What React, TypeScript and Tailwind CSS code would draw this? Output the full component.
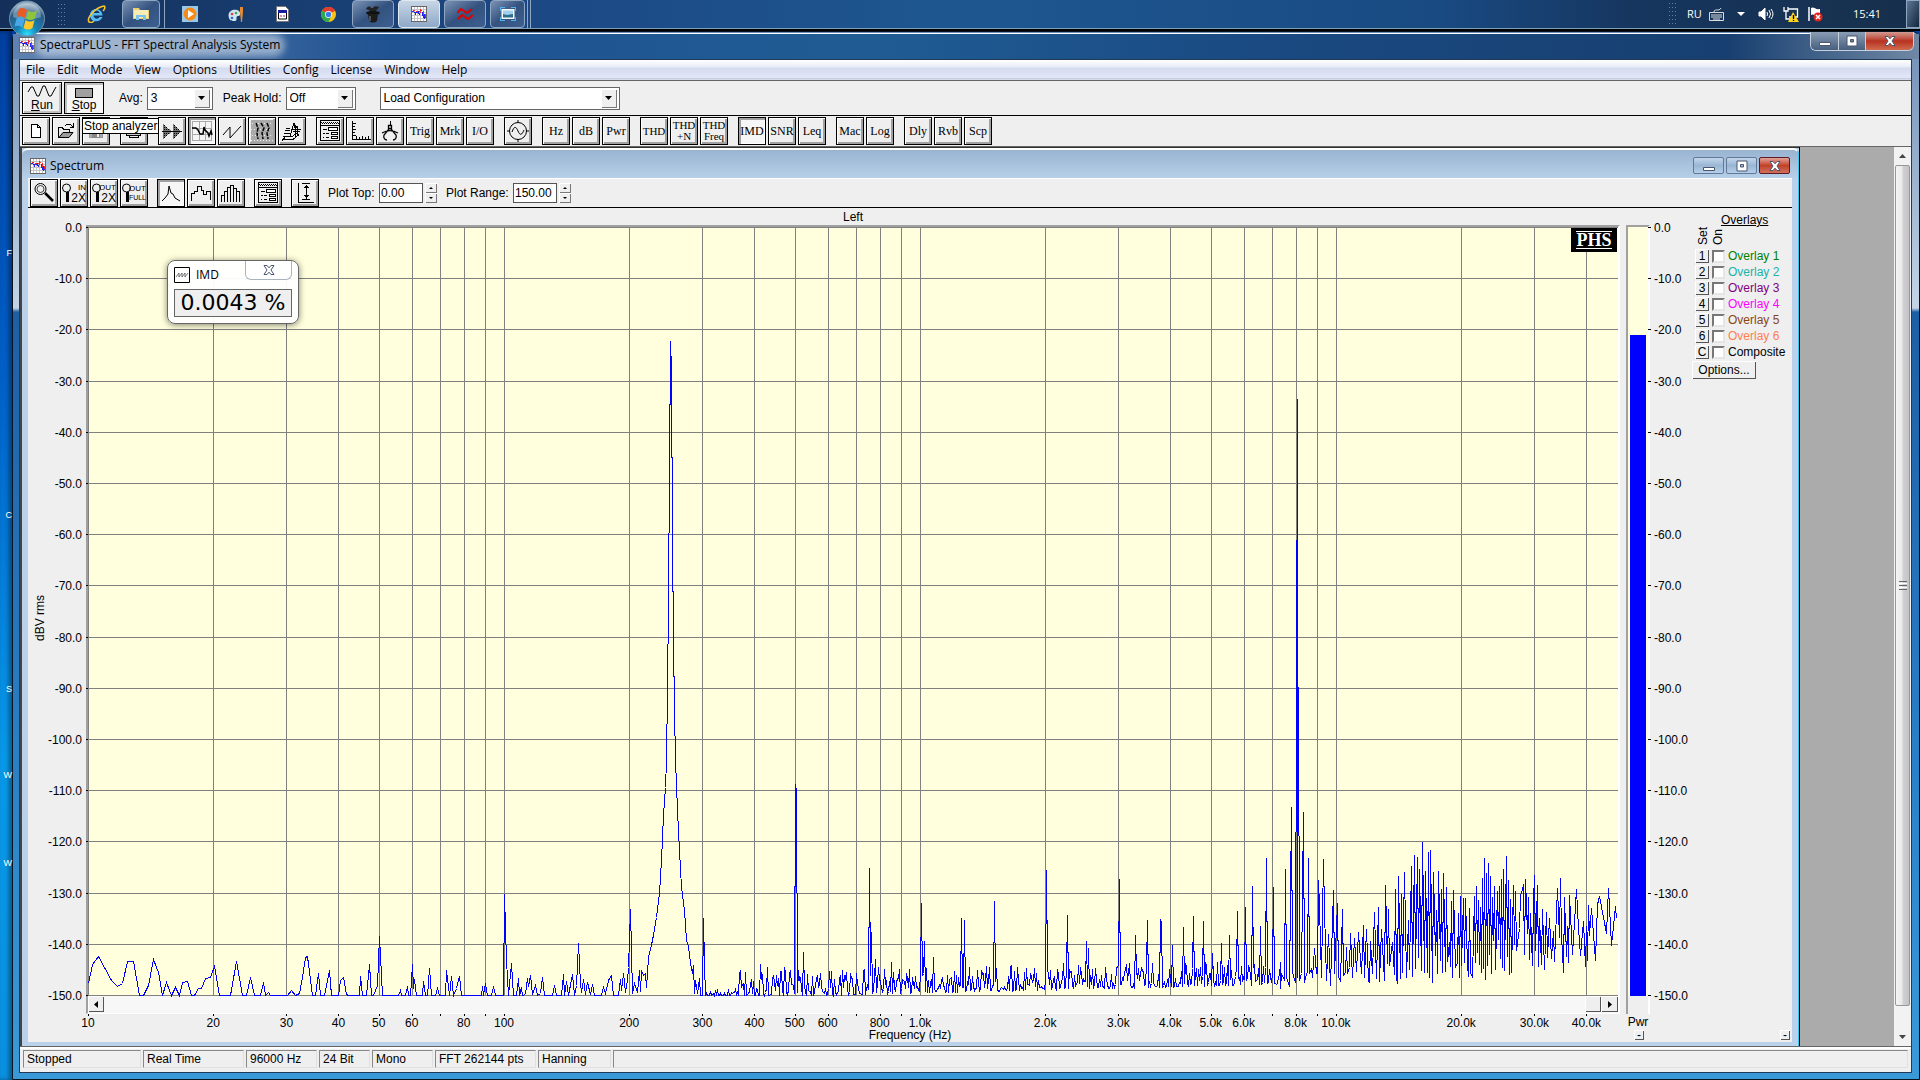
import { useId, type ReactNode } from 'react';

type Point = [number, number];

type ToolItem = {
    name: string;
    icon?: ReactNode;
    label?: string[];
    pressed?: boolean;
}

/* Trace geometry: x 88..1618 is 10 Hz..47.6 kHz, y 227..995 is 0..-150 dB */
const LEFT = 88;
const TOP = 227;
const WIDTH = 1530;
const HEIGHT = 768;
const DECADES = 3.678;

const lowBand: Point[] = [
    [88, 983], [92, 964], [98, 956], [111, 980], [117, 986], [122, 983], [127, 961], [133, 961], [139, 995], [143, 995], [148, 985], [153, 959], [158, 972],
    [162, 995], [166, 982], [171, 995], [175, 987], [179, 995], [182, 982], [187, 981], [191, 995], [194, 995], [198, 988], [201, 988], [205, 978], [210, 977],
    [214, 966], [219, 995], [230, 995], [236, 961], [242, 995], [246, 995], [250, 977], [254, 995], [260, 995], [263, 982], [265, 995], [268, 992], [270, 995],
    [287, 995], [291, 990], [295, 995], [299, 993], [302, 977], [305, 957], [307, 956], [312, 995], [315, 995], [318, 973], [320, 995], [324, 995], [329, 970],
    [331, 995], [338, 995], [340, 980], [343, 977], [346, 994], [348, 995], [359, 995], [360, 976], [362, 995], [366, 995], [369, 964], [371, 995], [373, 995],
    [377, 985], [379, 936], [382, 995], [398, 995], [400, 990], [401, 995], [405, 995], [407, 986], [408, 995], [410, 995], [412, 964], [413, 988], [414, 979],
    [416, 995], [422, 995], [423, 981], [425, 995], [427, 995], [429, 968], [431, 995], [435, 995], [437, 988], [439, 995], [445, 995], [446, 970], [449, 995],
    [451, 976], [453, 995], [456, 988], [459, 976], [461, 995], [481, 995], [482, 986], [483, 995], [485, 983], [487, 995], [491, 995], [493, 986], [495, 995],
    [503, 995], [504, 894], [506, 960], [508, 995], [511, 963], [513, 995], [516, 995], [518, 978], [519, 995], [521, 987], [522, 995], [525, 994], [527, 978],
    [528, 986], [530, 975], [532, 994], [535, 985], [537, 995], [540, 993], [542, 977], [544, 995], [552, 995], [554, 985], [556, 995], [561, 995], [563, 974],
    [564, 995], [566, 981], [568, 995], [572, 974], [574, 995], [576, 985], [578, 943], [580, 983], [581, 992], [583, 979], [585, 994], [587, 982], [590, 994],
    [592, 984], [594, 995], [601, 995], [603, 987], [605, 993], [608, 980], [611, 975], [613, 995], [618, 995], [620, 979], [621, 990], [623, 973], [625, 992],
    [627, 980], [628, 967], [630, 909], [632, 993], [634, 983], [637, 992], [639, 970], [640, 991], [641, 970], [643, 975], [645, 973], [646, 987], [648, 957],
    [652, 940], [656, 917], [659, 893], [661, 860], [663, 815], [665, 787], [666, 760], [667, 690], [668, 600], [669, 470], [670, 341], [671, 370], [672, 540],
    [673, 640], [674, 710], [675, 760], [677, 810], [679, 850], [681, 887], [684, 910], [686, 940], [688, 946], [690, 963], [692, 973], [693, 965], [694, 993],
    [695, 980], [697, 993], [699, 978], [700, 995], [702, 995], [703, 918], [704, 963], [705, 995],
];

const midPeaks: Point[] = [
    [739, 973], [760, 964], [767, 967], [781, 971], [784, 967], [789, 973], [795, 784], [796, 790], [803, 952], [829, 971], [846, 972], [850, 973], [856, 973],
    [869, 868], [871, 932], [875, 959], [878, 967], [891, 962], [921, 903], [924, 941], [933, 957], [961, 918], [964, 920], [986, 966], [994, 901], [1011, 965],
    [1026, 968], [1046, 870], [1057, 969], [1063, 963], [1067, 915], [1086, 941], [1088, 948], [1105, 967], [1119, 879], [1126, 964], [1135, 935], [1147, 920],
    [1160, 919], [1161, 922], [1172, 945], [1183, 927], [1193, 916], [1203, 921], [1212, 953], [1221, 943], [1229, 935], [1237, 911], [1245, 907], [1252, 886],
    [1260, 926], [1266, 858], [1273, 887],
];

/* thirds of a pixel from (1280, 820) */
const highBand: Point[] = [
    [0, 427], [2, 505], [5, 460], [13, 480], [16, 147], [20, 470], [28, 497], [34, -39], [38, 455], [45, 485], [51, -1263], [53, 470], [56, -400], [58, 480], [64, 460],
    [70, -24], [74, 487], [78, 460], [82, 455], [85, 115], [89, 460], [93, 445], [97, 472], [103, 385], [110, 460], [112, 460], [115, 180], [118, 262], [124, 470],
    [130, 117], [133, 270], [139, 480], [145, 342], [152, 495], [160, 210], [164, 460], [172, 248], [176, 467], [181, 482], [187, 267], [190, 465], [196, 457],
    [199, 380], [203, 458], [208, 440], [212, 338], [217, 470], [223, 355], [229, 452], [236, 336], [243, 460], [250, 315], [254, 472], [260, 327], [264, 480],
    [268, 487], [272, 363], [278, 460], [283, 276], [289, 475], [295, 262], [299, 482], [304, 327], [313, 480], [316, 195], [321, 430], [325, 267], [329, 435],
    [337, 365], [343, 462], [346, 207], [349, 470], [352, 490], [355, 168], [361, 475], [364, 222], [368, 455], [373, 155], [379, 470], [385, 300], [388, 447],
    [394, 137], [397, 468], [403, 105], [406, 445], [412, 110], [415, 410], [418, 147], [424, 450], [427, 67], [433, 455], [436, 153], [441, 455], [445, 96],
    [448, 470], [451, 90], [457, 487], [460, 155], [466, 405], [469, 270], [472, 460], [475, 153], [481, 420], [484, 207], [487, 455], [490, 158], [496, 452],
    [499, 200], [503, 422], [508, 365], [511, 437], [514, 243], [517, 472], [520, 210], [527, 440], [532, 425], [535, 280], [538, 470], [541, 228], [545, 435],
    [550, 233], [553, 425], [556, 233], [562, 432], [565, 467], [568, 263], [571, 455], [577, 472], [583, 228], [586, 425], [589, 198], [592, 395], [595, 240],
    [598, 432], [601, 262], [605, 457], [607, 174], [610, 445], [613, 114], [616, 477], [619, 158], [622, 435], [625, 130], [628, 402], [631, 168], [635, 458],
    [637, 232], [641, 360], [643, 198], [646, 447], [652, 213], [656, 357], [658, 198], [661, 415], [664, 177], [667, 442], [670, 147], [673, 450], [679, 108],
    [682, 407], [685, 180], [688, 462], [691, 237], [694, 455], [700, 195], [703, 372], [706, 213], [710, 390], [718, 325], [722, 225], [727, 207], [730, 192],
    [733, 402], [736, 177], [742, 338], [745, 232], [748, 417], [751, 280], [758, 435], [760, 243], [763, 165], [767, 390], [772, 195], [775, 437], [778, 295],
    [784, 432], [787, 267], [793, 447], [799, 277], [803, 412], [808, 295], [814, 415], [820, 333], [824, 422], [832, 204], [838, 350], [841, 174], [845, 345],
    [850, 455], [854, 232], [860, 407], [862, 317], [865, 425], [868, 225], [878, 402], [889, 207], [896, 325], [902, 405], [910, 303], [916, 437], [919, 317],
    [922, 420], [926, 255], [928, 345], [934, 263], [946, 420], [952, 252], [958, 228], [970, 290], [979, 338], [985, 204], [995, 375], [1006, 258], [1010, 293],
];

/* noise floor between 290 Hz and 7.3 kHz, rising slowly, with the measured peaks on top */
const buildMidBand = () => {
    const points: Point[] = [];
    const peaks = new Map(midPeaks);
    let seed = 17;
    for (let x = 706; x < 1280; x++) {
        seed = (seed * 1103515245 + 12345) % 2147483648;
        const r = seed / 2147483648;
        const t = (x - 706) / 574;
        const floor = 995 - t * 14;
        const swing = x < 740 ? 9 : 26 - t * 2;
        const peak = peaks.get(x);
        points.push([x, peak ?? Math.round(Math.min(995, floor + 3 - swing * r * r))]);
    }
    return points;
};

const trace = [
    ...lowBand,
    ...buildMidBand(),
    ...highBand.map(([x, y]): Point => [Math.floor(1280 + x / 3), Math.round(820 + y / 3)]),
];
const tracePath = 'M' + trace.map(([x, y]) => `${x + 0.5} ${y + 0.5}`).join('L');

const levels = Array.from({ length: 16 }, (_, i) => ({ text: (i === 0 ? '' : '-') + (i * 10).toFixed(1), pos: `${(i / 15) * 100}%` }));

const freqs: number[] = [];
[10, 100, 1000, 10000].forEach((d) => {
    for (let n = 1; n < 10; n++) {
        if (d * n <= 40000) freqs.push(d * n);
    }
});
const freqPos = (f: number) => `${(Math.log10(f / 10) / DECADES) * 100}%`;
const freqText = (f: number) => {
    if (/^[79]/.test(String(f))) return '';
    return f >= 1000 ? `${(f / 1000).toFixed(1)}k` : String(f);
};

const overlays = [
    { key: '1', name: 'Overlay 1', color: 'text-[#008000]' },
    { key: '2', name: 'Overlay 2', color: 'text-[#20b2aa]' },
    { key: '3', name: 'Overlay 3', color: 'text-[#800080]' },
    { key: '4', name: 'Overlay 4', color: 'text-[#ff00ff]' },
    { key: '5', name: 'Overlay 5', color: 'text-[#8b4513]' },
    { key: '6', name: 'Overlay 6', color: 'text-[#ff7f50]' },
    { key: 'C', name: 'Composite', color: 'text-black' },
];

const menus = ['File', 'Edit', 'Mode', 'View', 'Options', 'Utilities', 'Config', 'License', 'Window', 'Help'];

const status = [
    { text: 'Stopped', width: 'w-[118px]' },
    { text: 'Real Time', width: 'w-[101px]' },
    { text: '96000 Hz', width: 'w-[71px]' },
    { text: '24 Bit', width: 'w-[51px]' },
    { text: 'Mono', width: 'w-[61px]' },
    { text: 'FFT 262144 pts', width: 'w-[101px]' },
    { text: 'Hanning', width: 'w-[73px]' },
];

function Glyph({ children }: { children: ReactNode }) {
    return (
        <svg viewBox="0 0 22 22" className="h-[22px] w-[22px]" fill="none" stroke="black" shapeRendering="crispEdges" aria-hidden="true">
            {children}
        </svg>
    );
}

const dialogGlyph = (
    <Glyph>
        <path d="M1.500 .500h19v20h-19z" fill="#efefef" />
        <path d="M2 2.500h18" strokeDasharray="1 1" />
        <path d="M3 3.500h17" strokeDasharray="1 1" />
        <path d="M2 5.500h18" />
        <path d="M9.500 7.500h9v3h-9zM12.500 12.500h6v2h-6zM12.500 16.500h6v2h-6z" fill="#fff" />
        <path d="M4 9.500h4M4 13.500h2M7 13.500h3M4 17.500h1M7 17.500h3" />
    </Glyph>
);

const fileTools: ToolItem[][] = [
    [
        { name: 'New', icon: <Glyph><path d="M6.500 4.500h6l3 3v10h-9zM12.500 4.500v3h3" fill="white" /></Glyph> },
        { name: 'Open', icon: <Glyph><path d="M3.500 17.500v-10h4l1 2h6v3" fill="#e8e8e8" /><path d="M4 17.500l4-5h10l-4 5z" fill="#999" shapeRendering="auto" /><path d="M10 6l2-2h3l3 3M18.500 3v5M15 7.500h4" /></Glyph> },
        { name: 'Save', icon: <Glyph><path d="M4.500 5.500h13v12h-13z" fill="#aaa" stroke="#999" /><path d="M7 12h8v6H7z" fill="#888" stroke="none" /><path d="M12 14h2v3h-2z" fill="#eee" stroke="none" /></Glyph> },
    ],
    [
        { name: 'Print', icon: <Glyph><path d="M3.500 10.500h14v5h-14z" fill="#ccc" /><path d="M6.500 15.500h9v2h-9zM7 13.500h6" /></Glyph> },
    ],
    [
        { name: 'Time series', icon: <Glyph><path d="M2 4l9 7.500L2 19zM12 4l8 7.500-8 7.500z" fill="#777" stroke="none" /><path d="M3.500 5v13M5.500 7v9M7.500 9v5M13.500 5v13M15.500 7v9M17.500 9v5" strokeDasharray="1 1" /><path d="M1 11.500h20" /></Glyph> },
        { name: 'Spectrum', pressed: true, icon: <Glyph><path d="M1.500 1.500h19v19h-19zM8.500 1v20M14.500 1v20M1 8.500h20M1 14.500h20" stroke="#aaa" /><path d="M1 8h4l2 2 2 4h3l1-7 1 3 3 3 1 3 2-5 1 4" shapeRendering="auto" strokeWidth="1.500" /></Glyph> },
        { name: 'Phase', icon: <Glyph><path d="M2 15L9 7v11L20 6" shapeRendering="auto" /></Glyph> },
        { name: 'Spectrogram', icon: <Glyph><path d="M0 0h22v22H0z" fill="#aaa" stroke="none" /><path d="M1 3.500h21M0 9.500h21M1 15.500h21M0 20.500h22" stroke="#eee" strokeDasharray="1 2" /><path d="M5 3l2 5-1 5 1 6M10 3l3 5-2 5 1 6M16 3l2 5-2 5 1 6" strokeWidth="1.500" strokeDasharray="4 1" shapeRendering="auto" /></Glyph> },
        { name: '3-D surface', icon: <Glyph><path d="M1 19.500h11l6-5M2 16.500h9l6-4M3 13.500h6M4 10.500h5M5 8.500h4M9 17l2-8 2-6 1 5 3-2M14 5v12M10 9h10M12 12l7-1M16 7v8M1 21l4-5" /></Glyph> },
    ],
    [
        { name: 'Settings', icon: dialogGlyph },
        { name: 'Scaling', icon: <Glyph><path d="M3.500 1v18.500h18M4 3.500h3M4 6.500h2M4 9.500h3M4 12.500h2M4 15.500h3M7.500 19v-3M10.500 19v-2M13.500 19v-3M16.500 19v-2M19.500 19v-3" /></Glyph> },
        { name: 'Calibration', icon: <Glyph><path d="M11 1v4" /><path d="M9.500 5.500h3v3h-3zM10 9L5 15c-1 3 1 5 3 5M12 9l5 6c1 3-1 5-3 5M3 13c5-3 11-3 16 0" shapeRendering="auto" strokeWidth="1.300" /></Glyph> },
        { name: 'Trigger', label: ['Trig'] },
        { name: 'Markers', label: ['Mrk'] },
        { name: 'Input and output', label: ['I/O'] },
    ],
    [
        { name: 'Signal generator', icon: <Glyph><circle cx="11" cy="11" r="8.500" shapeRendering="auto" /><path d="M5 12c2-6 4-6 6-1s4 4 6-1M11 0v3M11 19v3M0 11h3M19 11h3" shapeRendering="auto" /></Glyph> },
    ],
    [
        { name: 'Peak frequency', label: ['Hz'] },
        { name: 'Peak amplitude', label: ['dB'] },
        { name: 'Total power', label: ['Pwr'] },
    ],
    [
        { name: 'THD', label: ['THD'] },
        { name: 'THD plus noise', label: ['THD', '+N'] },
        { name: 'THD against frequency', label: ['THD', 'Freq'] },
    ],
    [
        { name: 'IMD', label: ['IMD'], pressed: true },
        { name: 'SNR', label: ['SNR'] },
        { name: 'Leq', label: ['Leq'] },
    ],
    [
        { name: 'Macro', label: ['Mac'] },
        { name: 'Logging', label: ['Log'] },
    ],
    [
        { name: 'Delay', label: ['Dly'] },
        { name: 'Reverb', label: ['Rvb'] },
        { name: 'Scope', label: ['Scp'] },
    ],
];

function ZoomGlyph({ top, bottom }: { top: string; bottom: string }) {
    return (
        <span className="relative flex h-[22px] w-6 flex-col items-end justify-center font-['Liberation_Sans',Arial,sans-serif]">
            <svg viewBox="0 0 10 20" className="absolute left-0 top-px h-5 w-[10px]" fill="none" stroke="black" aria-hidden="true">
                <circle cx="4.500" cy="5" r="4" />
                <path d="M5.500 9v10" strokeWidth="3" />
            </svg>
            <span className="text-[8px] leading-[9px]">{top}</span>
            <span className={bottom === '2X' ? 'text-[12px] leading-[12px]' : 'text-[7px] leading-[10px]'}>{bottom}</span>
        </span>
    );
}

const plotTools: ToolItem[][] = [
    [
        { name: 'Zoom', icon: <Glyph><circle cx="7.500" cy="7" r="5.500" shapeRendering="auto" /><circle cx="7.500" cy="7" r="3.500" strokeWidth=".7" shapeRendering="auto" /><path d="M12 11l8 8" strokeWidth="2.500" shapeRendering="auto" /></Glyph> },
        { name: 'Zoom in 2X', icon: <ZoomGlyph top="IN" bottom="2X" /> },
        { name: 'Zoom out 2X', icon: <ZoomGlyph top="OUT" bottom="2X" /> },
        { name: 'Zoom out full', icon: <ZoomGlyph top="OUT" bottom="FULL" /> },
    ],
    [
        { name: 'Line plot', pressed: true, icon: <Glyph><path d="M2 19l3-3 3-4 1-8 2 7 2 1 2 4 5 3" shapeRendering="auto" /></Glyph> },
        { name: 'Octave plot', icon: <Glyph><path d="M1.500 19v-8h3v-2h3v-5h4v4h2v4h3v-3h4v9" /></Glyph> },
        { name: 'Bar plot', icon: <Glyph><path d="M1.500 20v-7h3v7V9h3v11V5h3v15V3h3v17V6h3v14V9h3v11" /></Glyph> },
    ],
    [{ name: 'Plot options', icon: dialogGlyph }],
    [{ name: 'Fit range', icon: <Glyph><path d="M4.500 1v19.500h15M8 1.500h8M8 17.500h8M12 3v14M10 5.500h5M11 4.500h3M10 13.500h5M11 14.500h3" /></Glyph> }],
];

function ToolButton({ item }: { item: ToolItem }) {
    const face = item.pressed
        ? 'bg-[#f6f6f6] shadow-[inset_2px_2px_0_#a0a0a0,inset_-1px_-1px_0_#fff]'
        : 'bg-[#efefef] shadow-[inset_1px_1px_0_#fff,inset_-2px_-2px_0_#a0a0a0]';
    const size = item.label && (item.label.length > 1 || item.label[0] === 'THD') ? 'text-[11px] leading-[11px]' : 'text-[12px] leading-[12px]';
    return (
        <button type="button" aria-label={item.name} aria-pressed={item.pressed} className={`flex h-7 w-7 shrink-0 flex-col items-center justify-center overflow-hidden border border-black font-['Liberation_Serif',serif] text-black ${face}`}>
            {item.icon}
            {item.label?.map((line) => <span key={line} className={size}>{line}</span>)}
        </button>
    );
}

function Toolbar({ groups, name, gap }: { groups: ToolItem[][]; name: string; gap: string }) {
    return (
        <div role="toolbar" aria-label={name} className={`flex ${gap}`}>
            {groups.map((group) => (
                <div key={group[0].name} className="flex gap-0.5">
                    {group.map((item) => <ToolButton key={item.name} item={item} />)}
                </div>
            ))}
        </div>
    );
}

function SpectrumIcon() {
    return (
        <svg viewBox="0 0 16 16" className="h-4 w-4 shrink-0" fill="none" shapeRendering="crispEdges" aria-hidden="true">
            <path d="M0 0h16v16H0z" fill="#fff" />
            <path d="M0 3.500h16M0 6.500h16M0 9.500h16M0 12.500h16M3.500 0v16M6.500 0v16M9.500 0v16M12.500 0v16" stroke="#c4c4c4" />
            <path d="M.5.500h15v15H.5z" stroke="#666" />
            <path d="M1 5.500h2M3 6.500h1M4.500 6v3M5 6.500h2M7.500 5v3M8.500 7v2M11.500 6v4M12.500 9v3M13.500 8v5M14 11.500h1" stroke="#2222f0" />
            <path d="M2 4.500h2M5 5.500h2M8 5.500h2M9.500 3v4M10 4.500h1M12.500 5v4M14.500 8v3" stroke="#f02828" />
        </svg>
    );
}

function SelectBox({ label, value, width, bare }: { label: string; value: string; width: string; bare?: boolean }) {
    const id = useId();
    return (
        <div className="flex items-center">
            {!bare && <label htmlFor={id} className="pr-1">{label}</label>}
            <div className={`relative flex h-[23px] items-center border border-[#666] bg-white ${width}`}>
                <select id={id} aria-label={bare ? label : undefined} defaultValue={value} className="h-full w-full appearance-none bg-transparent pl-[3px] text-[12px]">
                    <option>{value}</option>
                </select>
                <span className="pointer-events-none absolute right-0.5 top-px flex h-[19px] w-4 items-center justify-center bg-[#efefef] shadow-[inset_1px_1px_0_#fff,inset_-1px_-1px_0_#777]">
                    <svg viewBox="0 0 7 4" className="h-1 w-[7px]" aria-hidden="true"><path d="M0 0h7L3.500 4z" /></svg>
                </span>
            </div>
        </div>
    );
}

function SpinBox({ label, value }: { label: string; value: string }) {
    const id = useId();
    return (
        <div className="flex items-center">
            <label htmlFor={id} className="w-[51px] whitespace-nowrap">{label}</label>
            <input id={id} defaultValue={value} className={`h-5 w-[44px] border border-[#555] bg-white pl-px text-[12px] ${label === 'Plot Range:' ? 'ml-4' : ''}`} />
            <span className="ml-0.5 flex flex-col">
                {['Raise', 'Lower'].map((way) => (
                    <button key={way} type="button" aria-label={`${way} ${label}`} className="flex h-[10px] w-3 items-center justify-center bg-[#efefef] shadow-[inset_1px_1px_0_#fff,inset_-1px_-1px_0_#777]">
                        <svg viewBox="0 0 4 2" className="h-0.5 w-1" aria-hidden="true"><path d={way === 'Raise' ? 'M0 2h4L2 0z' : 'M0 0h4L2 2z'} /></svg>
                    </button>
                ))}
            </span>
        </div>
    );
}

function CaptionGlyph({ kind }: { kind: string }) {
    return (
        <svg viewBox="0 0 14 12" className="h-3 w-[14px]" aria-hidden="true">
            {kind === 'Minimize' && <path d="M1.500 7.500h11v3h-11z" fill="#fff" stroke="#4a5570" />}
            {kind === 'Restore' && <path d="M2 1h10v10H2zM5.500 4.500h3v2.500h-3z" fill="#fff" stroke="#4a5570" fillRule="evenodd" />}
            {kind === 'Close' && <path d="M2 1.500h3l2 2.300 2-2.300h3L9 6l3 4.500H9L7 8.200 5 10.500H2L5 6z" fill="#fff" stroke="#4a5570" />}
        </svg>
    );
}

function TaskButton({ name, active, width, children }: { name: string; active?: boolean; width: string; children: ReactNode }) {
    const face = active
        ? 'bg-linear-to-b from-[#c8d6e6] to-[#8fa9c8] border-[#e0e8f0]'
        : 'bg-linear-to-br from-[#7d93b4] via-[#33527f] to-[#3d6091] border-[#8fa6c2]';
    return (
        <button type="button" aria-label={name} className={`flex h-7 items-center justify-center rounded-sm border ${width} ${face}`}>
            {children}
        </button>
    );
}

function Grip() {
    return (
        <svg viewBox="0 0 8 22" className="h-[22px] w-2" fill="#5f7fa8" shapeRendering="crispEdges" aria-hidden="true">
            {[0, 4, 8, 12, 16, 20].map((y) => <path key={y} d={`M0 ${y}h1v1h-1zM3 ${y}h1v1h-1zM6 ${y}h1v1h-1z`} />)}
        </svg>
    );
}

function Taskbar() {
    return (
        <header className="relative z-10 flex h-[31px] shrink-0 border-b-2 border-black bg-[linear-gradient(90deg,#14305a,#1c4a86_30%,#1e5790_50%,#194a82_75%,#16365f_85%,#172f4b)]">
            <div className="flex flex-1 items-start border-b border-[#7d9fb8]">
                <button type="button" aria-label="Start" className="ml-2 h-[38px] w-[38px] shrink-0">
                    <svg viewBox="0 0 38 38" aria-hidden="true">
                        <defs>
                            <radialGradient id="orb" cx="50%" cy="95%" r="85%">
                                <stop offset="0" stopColor="#2de0ff" /><stop offset=".35" stopColor="#1583b8" /><stop offset=".8" stopColor="#2b5a84" /><stop offset="1" stopColor="#8fa9bf" />
                            </radialGradient>
                        </defs>
                        <circle cx="19" cy="18.500" r="17.500" fill="url(#orb)" stroke="#6f93ab" />
                        <path d="M5 17a14 14 0 0 1 28 0c-8 3-20 3-28 0z" fill="#fff" opacity=".3" />
                        <path d="M11 9c3-2 5-1 8 1l-2 8c-3-2-5-2-8-1z" fill="#ea5b24" />
                        <path d="M20 10.500c3 2 6 2 9 0l-2 8c-3 2-6 2-9 0z" fill="#8cc43c" />
                        <path d="M8.500 18.500c3-1 5-1 8 1l-2 8c-3-2-5-2-8-1z" fill="#4aa8e8" />
                        <path d="M17.500 20c3 2 6 2 9 0l-2 8c-3 2-6 2-9 0z" fill="#fdc828" />
                    </svg>
                </button>
                <div className="ml-3 mt-1"><Grip /></div>
                <nav aria-label="Tasks" className="flex h-7 items-center">
                    <button type="button" aria-label="Internet Explorer" className="ml-[21px] w-[19px]">
                        <svg viewBox="0 0 19 18" aria-hidden="true">
                            <path d="M15.500 10.500H6.500c.5 4 5 4 6 1.500h3C13.500 18 3 18 3 10S15 1.500 15.500 10.500zM6.500 8h6c-.5-3.500-5.500-3.500-6 0z" fill="#55bcf4" />
                            <path d="M2 17C-1 12 10 2 17 1c2 1 0 4-1 5M2 17c2 1 4 0 5-1" fill="none" stroke="#f6c52c" strokeWidth="1.600" />
                        </svg>
                    </button>
                    <div className="ml-4 flex border-r border-[#8fa6c2] pr-1">
                        <TaskButton name="Explorer" width="w-[38px]">
                            <svg viewBox="0 0 18 16" className="w-[18px]" aria-hidden="true">
                                <path d="M1 2h6l1 2h9v9H1z" fill="#e8cf78" /><path d="M2 4h14v8H2z" fill="#f8eeb4" /><path d="M4 14V9h10v5h-3v-3H7v3z" fill="#7cc4ea" />
                            </svg>
                        </TaskButton>
                    </div>
                    <button type="button" aria-label="Media Player" className="ml-[17px] w-4">
                        <svg viewBox="0 0 16 16" aria-hidden="true"><path d="M0 0h16v16H0z" fill="#9ac8e8" /><circle cx="8" cy="8" r="6.500" fill="#f58a14" /><path d="M6 4l6 4-6 4z" fill="#fff" /></svg>
                    </button>
                    <button type="button" aria-label="Paint" className="ml-[30px] w-[17px]">
                        <svg viewBox="0 0 17 16" aria-hidden="true"><path d="M1 12C-1 6 4 3 9 4c4 1 4 6 1 6s0 5-3 5-5 0-6-3z" fill="#cfe4f2" /><circle cx="4" cy="8" r="1.300" fill="#e04038" /><circle cx="8" cy="7" r="1.300" fill="#3cae48" /><circle cx="4" cy="12" r="1.300" fill="#2c6ed0" /><path d="M12 1h3v5l-1 10h-1L12 6z" fill="#e88a30" /></svg>
                    </button>
                    <button type="button" aria-label="Console" className="ml-[31px] w-[13px]">
                        <svg viewBox="0 0 13 16" aria-hidden="true"><path d="M.5.500h9l3 3v12H.5z" fill="#fff" stroke="#777" /><path d="M2.500 5h8v8h-8z" fill="#fff" stroke="#000" /><path d="M2 4h9v3H2z" fill="#1a1aa0" /><path d="M5 9v2M8 9v2" stroke="#c0187a" /></svg>
                    </button>
                    <button type="button" aria-label="Chrome" className="ml-8 w-[15px]">
                        <svg viewBox="0 0 16 16" aria-hidden="true"><circle cx="8" cy="8" r="8" fill="#fbc116" /><path d="M8 8L1.100 4A8 8 0 0 1 15 4z" fill="#e33b2e" /><path d="M8 8L1.100 4A8 8 0 0 0 8 16l3-6z" fill="#2da94f" /><circle cx="8" cy="8" r="3.700" fill="#fff" /><circle cx="8" cy="8" r="2.900" fill="#3a7cec" /></svg>
                    </button>
                    <div className="ml-4 flex gap-1">
                        <TaskButton name="Magician" width="w-[42px]">
                            <svg viewBox="0 0 18 18" className="w-[18px]" aria-hidden="true"><path d="M2 4c2-3 4-3 5-1l2 0c1-2 3-2 6-1-1 2-2 2-3 4l-2 2H7L5 5z" fill="#222" /><ellipse cx="9" cy="8" rx="7" ry="2" fill="#111" /><path d="M4 9h10l-1 7c-3 2-5 2-8 0z" fill="#1c1c1c" /><path d="M6 11v5" stroke="#888" /></svg>
                        </TaskButton>
                        <TaskButton name="SpectraPLUS" width="w-[42px]" active><SpectrumIcon /></TaskButton>
                        <TaskButton name="Signal" width="w-[42px]">
                            <svg viewBox="0 0 16 14" className="w-4" fill="none" stroke="#e00000" strokeWidth="2" aria-hidden="true"><path d="M0 6l4-4 6 4 5-4M1 12l4-4 6 4 5-4" /></svg>
                        </TaskButton>
                        <div className="flex gap-0.5 border-r border-[#8fa6c2] pr-0.5">
                            <div className="flex border-r border-[#8fa6c2] pr-0.5">
                                <TaskButton name="Photo viewer" width="w-[35px]">
                                    <svg viewBox="0 0 16 14" className="w-4" aria-hidden="true"><path d="M0 0h5v1H1v3H0zM11 0h5v4h-1V1h-4zM0 10h1v3h4v1H0zM15 10h1v4h-5v-1h4z" fill="#4fb4ec" /><path d="M1.500 2h13v10h-13z" fill="#f5f8fa" /><path d="M3 3.500h10V8H3z" fill="#9ed0ee" /><path d="M3 7l4 1 6-1v3.500H3z" fill="#2f6f8c" /></svg>
                                </TaskButton>
                            </div>
                        </div>
                    </div>
                </nav>
                <div className="ml-auto flex h-7 items-center text-white">
                    <Grip />
                    <span className="ml-[10px] w-[22px] font-['Open_Sans',sans-serif] text-[11px]">RU</span>
                    <button type="button" aria-label="Keyboard layout" className="w-[15px]">
                        <svg viewBox="0 0 15 14" fill="none" stroke="#ddd" aria-hidden="true"><path d="M.5 5.500h14v8H.5zM2 8h11M2 10h11M4 12h7M5 5c0-4 5 0 7-4" /></svg>
                    </button>
                    <button type="button" aria-label="Language bar options" className="ml-[13px] w-2">
                        <svg viewBox="0 0 8 4" fill="#fff" aria-hidden="true"><path d="M0 0h8L4 4z" /></svg>
                    </button>
                    <button type="button" aria-label="Volume" className="ml-[13px] w-4">
                        <svg viewBox="0 0 16 14" fill="none" stroke="#fff" aria-hidden="true"><path d="M1 5h2l4-4v12L3 9H1z" fill="#fff" /><path d="M9 5q1 2 0 4M11 3q3 4 0 8M13 2q4 5 0 10" /></svg>
                    </button>
                    <button type="button" aria-label="Network" className="ml-[9px] w-4">
                        <svg viewBox="0 0 16 16" aria-hidden="true"><path d="M5 3h9.500v8H6M1 1v4h4V1M3 5v8h4" fill="none" stroke="#fff" strokeWidth="1.300" /><path d="M10 6l6 10H5z" fill="#ffd21c" /><path d="M10.500 9v4M10.500 14v1" stroke="#000" strokeWidth="1.300" /></svg>
                    </button>
                    <button type="button" aria-label="Action Center" className="ml-[9px] w-[15px]">
                        <svg viewBox="0 0 15 16" aria-hidden="true"><path d="M1 1v14" stroke="#fff" strokeWidth="1.500" /><path d="M3 2c3-2 4 2 9 1v7c-5 1-6-3-9-1z" fill="#fff" /><circle cx="10" cy="11" r="4.500" fill="#e0241c" /><path d="M8 9l4 4M12 9l-4 4" stroke="#fff" strokeWidth="1.500" /></svg>
                    </button>
                    <time className="ml-[30px] w-[53px] font-['Open_Sans',sans-serif] text-[11px]">15:41</time>
                    <button type="button" aria-label="Show desktop" className="h-7 w-[14px] border border-[#8fa6c2] bg-linear-to-br from-[#5f7896] to-[#14283f]" />
                </div>
            </div>
        </header>
    );
}

function ScaleLabels({ side }: { side: 'left' | 'right' }) {
    const left = side === 'left';
    return (
        <svg className="relative z-[1] mb-px min-h-0 w-full flex-1 overflow-visible text-[12px]" shapeRendering="crispEdges" aria-hidden="true">
            {levels.map(({ text, pos }) => (
                <g key={pos}>
                    <rect x={left ? '100%' : -2} y={pos} width={left ? 2 : 3} height="1" />
                    <text x={left ? '100%' : 4} y={pos} dx={left ? -4 : 0} dy="5" textAnchor={left ? 'end' : 'start'}>{text}</text>
                </g>
            ))}
        </svg>
    );
}

function ImdWindow() {
    return (
        <section aria-label="IMD" className="absolute left-[79px] top-[33px] w-[132px] rounded-lg border border-[#666] bg-white/95 px-1.5 pb-1.5 shadow-[0_1px_6px_rgba(0,0,0,0.5)]">
            <header className="flex h-7 items-start">
                <svg viewBox="0 0 16 16" className="mt-1.5 h-4 w-4" fill="#fff" stroke="#000" aria-hidden="true"><path d="M.5.500h15v15H.5z" /><path d="M2 10l3-4v4l3-4v4l3-4v4l3-4" fill="none" stroke="#555" strokeWidth=".8" /></svg>
                <h3 className="ml-1.5 mt-1.5 font-['Open_Sans',sans-serif] text-[12px] leading-4">IMD</h3>
                <button type="button" aria-label="Close IMD" className="ml-auto flex h-[19px] w-[47px] items-center justify-center rounded-b-md border border-t-0 border-[#aab4bc] bg-white">
                    <CaptionGlyph kind="Close" />
                </button>
            </header>
            <output className="flex h-7 items-center justify-center border border-[#666] bg-[#efefef] font-['DejaVu_Sans',sans-serif] text-[22px] leading-[26px] whitespace-nowrap">0.0043 %</output>
        </section>
    );
}

function Plot() {
    return (
        <div className="flex min-w-0 flex-1 flex-col">
            <h3 className="h-[17px] text-center text-[12px] leading-[18px]">Left</h3>
            <div className="relative flex min-h-0 flex-1 flex-col border-b border-l-2 border-r-2 border-t-2 border-b-white border-l-[#a0a0a0] border-r-white border-t-[#a0a0a0] bg-[#ffffdd]">
                <div className="relative mb-px min-h-0 flex-1">
                    <svg className="absolute inset-0 h-full w-full overflow-visible" shapeRendering="crispEdges" role="img" aria-label="Spectrum, left channel">
                        {levels.map(({ pos }) => <line key={pos} x1="0" x2="100%" y1={pos} y2={pos} stroke="#808080" transform="translate(0 0.500)" />)}
                        {freqs.map((f) => <line key={f} x1={freqPos(f)} x2={freqPos(f)} y1="0" y2="100%" stroke="#808080" transform="translate(0.500 0)" />)}
                        <svg viewBox={`${LEFT} ${TOP} ${WIDTH} ${HEIGHT}`} width="100%" height="100%" preserveAspectRatio="none" overflow="visible">
                            <path d={tracePath} fill="none" stroke="#0000ff" vectorEffect="non-scaling-stroke" />
                        </svg>
                    </svg>
                </div>
                <div className="flex h-[17px] justify-between bg-[#f7f7f7]">
                    <button type="button" aria-label="Scroll left" className="flex h-4 w-4 items-center justify-center bg-[#efefef] shadow-[inset_1px_1px_0_#fff,inset_-1px_-1px_0_#555]">
                        <svg viewBox="0 0 4 7" className="h-[7px] w-1" aria-hidden="true"><path d="M4 0v7L0 3.500z" /></svg>
                    </button>
                    <div className="flex">
                        <span className="h-4 w-4 bg-[#efefef] shadow-[inset_1px_1px_0_#fff,inset_-1px_-1px_0_#555]" />
                        <button type="button" aria-label="Scroll right" className="flex h-4 w-[17px] items-center justify-center bg-[#efefef] shadow-[inset_1px_1px_0_#fff,inset_-1px_-1px_0_#555]">
                            <svg viewBox="0 0 4 7" className="h-[7px] w-1" aria-hidden="true"><path d="M0 0v7l4-3.500z" /></svg>
                        </button>
                    </div>
                </div>
                <span className="absolute right-px top-px flex h-6 w-[46px] items-center justify-center bg-black">
                    <span className="border-y border-white font-['Liberation_Serif',serif] text-[18px] font-bold leading-[16px] text-white">PHS</span>
                </span>
                <ImdWindow />
            </div>
            <svg className="ml-0.5 mr-0.5 h-[14px] overflow-visible text-[12px]" shapeRendering="crispEdges" aria-hidden="true">
                {freqs.map((f) => (
                    <g key={f}>
                        <rect x={freqPos(f)} y="-1" width="1" height="3" />
                        <text x={freqPos(f)} y="13" textAnchor="middle">{freqText(f)}</text>
                    </g>
                ))}
            </svg>
        </div>
    );
}

function OverlayPanel() {
    return (
        <aside aria-label="Overlays" className="flex w-[102px] shrink-0 flex-col items-start pt-[5px]">
            <h3 className="ml-[31px] text-[12px] leading-[14px] underline">Overlays</h3>
            <div className="ml-1.5 flex h-[18px] items-end gap-px text-[12px] leading-[14px]">
                <span className="rotate-180 [writing-mode:vertical-rl]">Set</span>
                <span className="rotate-180 [writing-mode:vertical-rl]">On</span>
            </div>
            <ul className="mt-[3px]">
                {overlays.map(({ key, name, color }) => (
                    <li key={key} className="flex h-4 items-center pl-[5px]">
                        <button type="button" aria-label={`Set ${name}`} className="h-[14px] w-[14px] bg-[#efefef] text-[12px] leading-[13px] shadow-[inset_1px_1px_0_#fff,inset_-1px_-1px_0_#555]">{key}</button>
                        <label className={`flex items-center text-[12px] ${color}`}>
                            <input type="checkbox" className="ml-[3px] mr-[3px] h-[13px] w-[13px] appearance-none border-2 border-b-[#e6e6e6] border-l-[#777] border-r-[#e6e6e6] border-t-[#777] bg-white" />
                            {name}
                        </label>
                    </li>
                ))}
            </ul>
            <button type="button" className="ml-0.5 mt-px h-[18px] w-16 bg-[#efefef] text-[12px] leading-[16px] shadow-[inset_1px_1px_0_#fff,inset_-1px_-1px_0_#555]">Options...</button>
        </aside>
    );
}

function SpectrumWindow() {
    return (
        <section aria-label="Spectrum" className="flex min-w-0 flex-1 flex-col border-l-2 border-t border-l-[#444] border-t-[#333] bg-[#b9d1ea]">
            <div className="flex min-h-0 flex-1 flex-col rounded-t-md border-r border-t-2 border-r-[#35c8f0] border-t-white bg-[linear-gradient(#99b4d1,#b9d1ea_30px)] pb-1 pl-1.5 pr-[6px]">
                <header className="flex h-7 items-center gap-1 pl-0.5 pt-[3px]">
                    <SpectrumIcon />
                    <h2 className="font-['Open_Sans',sans-serif] text-[12px]">Spectrum</h2>
                    <div className="ml-auto flex gap-0.5 pr-0.5">
                        {['Minimize', 'Restore', 'Close'].map((kind) => (
                            <button key={kind} type="button" aria-label={`${kind} Spectrum`} className={`flex h-[17px] w-[31px] items-center justify-center rounded-xs border ${kind === 'Close' ? 'border-[#5a1a28] bg-linear-to-b from-[#e3a197] via-[#c1402a] to-[#d0705a]' : 'border-[#61789a] bg-linear-to-b from-[#c3d6ea] via-[#9ab6d4] to-[#b5cfe8]'}`}>
                                <CaptionGlyph kind={kind} />
                            </button>
                        ))}
                    </div>
                </header>
                <div className="flex h-[30px] items-center border-b border-t border-b-black border-t-white bg-[#efefef] pl-0.5">
                    <Toolbar name="Plot" groups={plotTools} gap="gap-[9px]" />
                    <div className="ml-[9px] flex gap-[9px] text-[12px]">
                        <SpinBox label="Plot Top:" value="0.00" />
                        <SpinBox label="Plot Range:" value="150.00" />
                    </div>
                </div>
                <div className="flex min-h-0 flex-1 flex-col bg-[#efefef]">
                    <div className="flex min-h-0 flex-1">
                        <div className="flex w-[58px] shrink-0">
                            <span className="ml-[5px] rotate-180 self-center text-[12px] leading-[14px] [writing-mode:vertical-rl]">dBV rms</span>
                            <div className="flex min-w-0 flex-1 flex-col pb-8 pt-[19px]">
                                <ScaleLabels side="left" />
                            </div>
                        </div>
                        <Plot />
                        <div className="ml-1.5 flex w-6 shrink-0 flex-col pt-[17px]">
                            <div className="flex min-h-0 flex-1 flex-col border-l-2 border-r-2 border-t-2 border-l-[#a0a0a0] border-r-white border-t-[#a0a0a0] pb-[18px]">
                                <div className="flex min-h-0 flex-1 flex-col justify-end bg-[#ffffdd] px-0.5">
                                    <div className="bg-[#0000ff]" style={{ height: `${(1 - 21.1 / 150) * 100}%` }} />
                                </div>
                            </div>
                            <span className="h-[14px] text-center text-[12px] leading-[17px]">Pwr</span>
                        </div>
                        <div className="flex w-10 shrink-0 flex-col pb-8 pt-[19px]">
                            <ScaleLabels side="right" />
                        </div>
                        <OverlayPanel />
                    </div>
                    <footer className="grid h-[14px] shrink-0 grid-cols-[1fr_auto_1fr] items-center text-[12px] leading-[14px]">
                        <span className="col-start-2">Frequency (Hz)</span>
                        <div className="flex justify-end gap-[136px] pr-0.5">
                            {['Hide power', 'Hide overlays'].map((name) => (
                                <button key={name} type="button" aria-label={name} className="h-[10px] w-[10px] bg-[#efefef] leading-[8px] shadow-[inset_1px_1px_0_#fff,inset_-1px_-1px_0_#555]">-</button>
                            ))}
                        </div>
                    </footer>
                </div>
            </div>
        </section>
    );
}

export default function App() {
    return (
        <div className="flex h-screen flex-col overflow-hidden bg-[linear-gradient(#003c9c,#0060c8_35%,#0898e8_70%,#0a90e0)] font-['Liberation_Sans',Arial,sans-serif] text-[12px] leading-4 text-black">
            <Taskbar />
            <div className="flex min-h-0 flex-1">
                <div className="relative w-3 shrink-0 text-[9px] text-white shadow-[inset_-3px_0_4px_rgba(0,0,0,0.4)]">
                    <span className="absolute right-0 top-[214px]">F</span>
                    <span className="absolute right-0 top-[476px]">C</span>
                    <span className="absolute right-0 top-[650px]">S</span>
                    <span className="absolute right-0 top-[736px]">W</span>
                    <span className="absolute right-0 top-[824px]">W</span>
                </div>
                <main className="flex min-w-0 flex-1 flex-col rounded-t-lg border border-[#0a1420] bg-[linear-gradient(#6f8db5,#b8cce0_240px,#c4d4e6_276px,#1d5fa5_280px,#2a80c8_70%,#3a9ad8)] p-px">
                    <div className="flex min-h-0 flex-1 flex-col rounded-t-md border-t border-t-white bg-transparent">
                        <header className="-mx-px flex h-[25px] shrink-0 items-center bg-[linear-gradient(90deg,#5f82b0,#1f5291_20%,#205c94_45%,#1a4a82_65%,#173f70_90%,#7088a4)] pb-[3px] pl-[6px] pr-[5px]">
                            <SpectrumIcon />
                            <h1 className="ml-[5px] rounded-full bg-white/45 font-['Open_Sans',sans-serif] text-[12px] leading-[14px] shadow-[0_0_7px_5px_rgba(255,255,255,0.45)]">SpectraPLUS - FFT Spectral Analysis System</h1>
                            <div className="-mt-0.5 ml-auto flex h-[19px] self-start overflow-hidden rounded-b-md border border-t-0 border-[#c5d0dc]">
                                <button type="button" aria-label="Minimize" className="flex w-7 items-center justify-center border-r border-[#c5d0dc] bg-linear-to-b from-[#8b9db4] to-[#46607f]"><CaptionGlyph kind="Minimize" /></button>
                                <button type="button" aria-label="Restore" className="flex w-[27px] items-center justify-center border-r border-[#c5d0dc] bg-linear-to-b from-[#8b9db4] to-[#46607f]"><CaptionGlyph kind="Restore" /></button>
                                <button type="button" aria-label="Close" className="flex w-[47px] items-center justify-center bg-linear-to-b from-[#d09a90] via-[#b83020] to-[#d06a50]"><CaptionGlyph kind="Close" /></button>
                            </div>
                        </header>
                        <div className="mb-[5px] ml-[5px] mr-1.5 flex min-h-0 flex-1 flex-col border border-[#223a5a] bg-[#efefef]">
                            <nav aria-label="Menu" className="flex h-[21px] shrink-0 items-center border-b border-[#666] bg-[linear-gradient(#ffffff,#e8ecf6_7px,#d5dbee_8px,#e2e7f8_18px,#b0b4cc_19px,#fff_20px)] font-['Open_Sans',sans-serif]">
                                {menus.map((menu) => <button key={menu} type="button" className="px-[6px] text-[12px]">{menu}</button>)}
                            </nav>
                            <div className="flex h-[35px] shrink-0 items-center border-b border-black pl-0.5">
                                <button type="button" className="flex h-8 w-10 flex-col items-center border border-black shadow-[inset_1px_1px_0_#fff,inset_-2px_-2px_0_#c0c0c0]">
                                    <svg viewBox="0 0 30 15" className="h-[15px] w-[30px]" fill="none" stroke="black" aria-hidden="true"><path d="M1 9l3-5h2l4 9h2l4-10h2l4 10h2l5-9" /></svg>
                                    <span className="leading-[14px]"><u>R</u>un</span>
                                </button>
                                <button type="button" aria-pressed="true" className="ml-0.5 flex h-8 w-10 flex-col items-center border border-black bg-[#f6f6f6] pt-[5px] shadow-[inset_2px_2px_0_#c0c0c0]">
                                    <span className="h-[11px] w-[18px] border border-black bg-[#a0a0a0]" />
                                    <span className="leading-[15px]"><u>S</u>top</span>
                                </button>
                                <div className="ml-[15px] flex">
                                    <SelectBox label="Avg:" value="3" width="w-[66px]" />
                                </div>
                                <div className="ml-[10px] flex">
                                    <SelectBox label="Peak Hold:" value="Off" width="w-[70px]" />
                                </div>
                                <div className="ml-6 flex">
                                    <SelectBox label="Configuration" value="Load Configuration" width="w-[240px]" bare />
                                </div>
                            </div>
                            <div className="relative flex h-[31px] shrink-0 items-center border-b border-[#666] pl-0.5">
                                <Toolbar name="Analyzer" groups={fileTools} gap="gap-[10px]" />
                                <span role="tooltip" className="absolute left-[62px] top-0.5 h-4 border border-black bg-white px-px leading-[14px] whitespace-nowrap">Stop analyzer</span>
                            </div>
                            <div className="flex min-h-0 flex-1">
                                <SpectrumWindow />
                                <div className="w-[95px] shrink-0 border-l border-black bg-[#ababab]" />
                                <div className="flex w-[17px] shrink-0 flex-col items-center bg-[#f2f2f2]">
                                    <button type="button" aria-label="Scroll up" className="flex h-[18px] w-full items-center justify-center">
                                        <svg viewBox="0 0 7 4" className="h-1 w-[7px]" fill="#444" aria-hidden="true"><path d="M0 4h7L3.500 0z" /></svg>
                                    </button>
                                    <div className="flex w-[15px] flex-1 flex-col items-center justify-center gap-px rounded-xs border border-[#979797] bg-[linear-gradient(90deg,#f5f5f5,#e9e9eb_45%,#d0d0d3_55%,#c4c4c8)]">
                                        <span className="h-px w-2 bg-[#666]" />
                                        <span className="h-px w-2 bg-white" />
                                        <span className="h-px w-2 bg-[#666]" />
                                        <span className="h-px w-2 bg-white" />
                                        <span className="h-px w-2 bg-[#666]" />
                                    </div>
                                    <button type="button" aria-label="Scroll down" className="flex h-10 w-full items-end justify-center pb-[7px]">
                                        <svg viewBox="0 0 7 4" className="h-1 w-[7px]" fill="#444" aria-hidden="true"><path d="M0 0h7L3.500 4z" /></svg>
                                    </button>
                                </div>
                            </div>
                            <footer className="flex h-[26px] shrink-0 gap-0.5 border-t border-[#666] px-[3px] pb-1 pt-[3px] shadow-[inset_0_2px_0_#fff]">
                                {status.map(({ text, width }) => (
                                    <span key={text} className={`border border-b-[#e0e0e0] border-l-[#888] border-r-[#e0e0e0] border-t-[#888] pl-[3px] leading-[16px] whitespace-nowrap ${width}`}>{text}</span>
                                ))}
                                <span className="flex-1 border border-b-[#e0e0e0] border-l-[#888] border-r-[#e0e0e0] border-t-[#888]" />
                            </footer>
                        </div>
                    </div>
                </main>
            </div>
        </div>
    );
}
